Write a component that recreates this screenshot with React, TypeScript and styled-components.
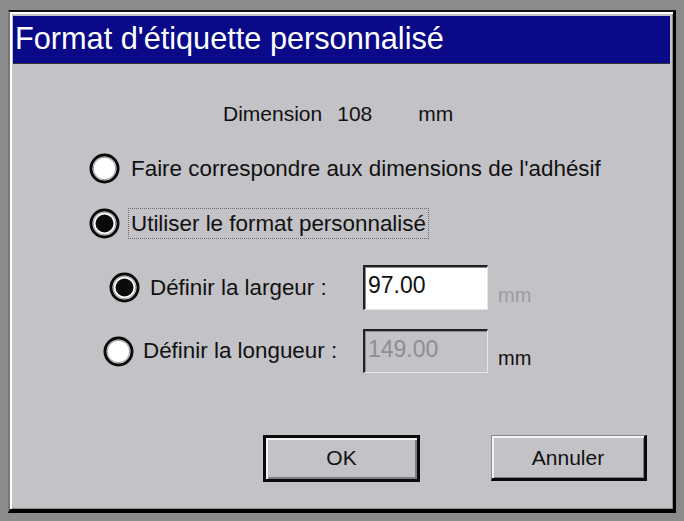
import React, { useState } from 'react';
import styled, { createGlobalStyle, css } from 'styled-components';

const GlobalStyle = createGlobalStyle`
  html, body {
    margin: 0;
    padding: 0;
    background: #8b8b8b;
  }
  * {
    box-sizing: border-box;
  }
`;

const Screen = styled.div`
  width: 684px;
  height: 521px;
  padding: 10px 8px 8px 8px;
  background: #8b8b8b;
  font-family: 'Liberation Sans', Arial, sans-serif;
`;

const Dialog = styled.div`
  width: 668px;
  height: 503px;
  display: flex;
  flex-direction: column;
  padding: 4px 3px 0 3px;
  background: #c3c2c6;
  border-style: solid;
  border-width: 2px 3px 4px 2px;
  border-color: #111 #000 #000 #777;
  box-shadow: inset 2px 2px 0 #fff, inset -1px -1px 0 #8a8a8a;
`;

const TitleBar = styled.div`
  height: 48px;
  padding-left: 2px;
  background: #0a0a88;
  border-bottom: 1px solid #333;
  color: #fff;
  font-size: 30.7px;
  line-height: 46px;
  white-space: nowrap;
`;

const Body = styled.div`
  flex: 1;
  display: flex;
  flex-direction: column;
  color: #111;
  font-size: 22.4px;
`;

const DimensionRow = styled.div`
  display: flex;
  height: 24px;
  margin-top: 38px;
  padding-left: 210px;
  font-size: 21px;
  line-height: 24px;
`;

const Spaced = styled.span<{ $gap: number }>`
  margin-left: ${(p) => p.$gap}px;
`;

const OptionRow = styled.div<{ $top: number; $indent: number }>`
  display: flex;
  align-items: center;
  gap: 11px;
  height: 30px;
  margin-top: ${(p) => p.$top}px;
  padding-left: ${(p) => p.$indent}px;
`;

const Label = styled.span<{ $focused?: boolean }>`
  height: 31px;
  padding: 0 2px;
  line-height: 29px;
  border: 1px dotted transparent;
  margin-left: -3px;
  white-space: nowrap;
  ${(p) =>
    p.$focused &&
    css`
      border-color: #6a6a6a;
    `}
`;

const FieldRow = styled.div<{ $top: number; $height: number }>`
  display: grid;
  grid-template-columns: 340px 125px auto;
  column-gap: 10px;
  align-items: center;
  height: ${(p) => p.$height}px;
  margin-top: ${(p) => p.$top}px;
`;

const FieldChoice = styled.div<{ $indent: number; $gap: number }>`
  display: flex;
  align-items: center;
  gap: ${(p) => p.$gap}px;
  padding-left: ${(p) => p.$indent}px;
  white-space: nowrap;
`;

const Field = styled.div<{ $disabled?: boolean }>`
  height: 100%;
  display: flex;
  align-items: center;
  padding: 0 0 5px 3px;
  font-size: 23px;
  background: ${(p) => (p.$disabled ? '#c3c2c6' : '#fff')};
  color: ${(p) => (p.$disabled ? '#8e8e8e' : '#111')};
  border-style: solid;
  border-width: 2px 1px 1px 2px;
  border-color: #222 #e6e6e6 #e6e6e6 #222;
  box-shadow: inset 1px 1px 0 #8a8a8a;
`;

const Unit = styled.span<{ $dim?: boolean }>`
  padding-top: 15px;
  font-size: 20px;
  color: ${(p) => (p.$dim ? '#9c9c9e' : '#111')};
`;

const ButtonRow = styled.div`
  display: flex;
  align-items: flex-start;
  gap: 71px;
  margin-top: 62px;
  padding-left: 250px;
`;

const Button = styled.button<{ $default?: boolean }>`
  width: 157px;
  height: 47px;
  font-family: 'Liberation Sans', Arial, sans-serif;
  font-size: 21px;
  color: #111;
  background: #c3c2c6;
  border-style: solid;
  ${(p) =>
    p.$default
      ? css`
          padding: 0 0 2px 0;
          border-width: 3px;
          border-color: #0a0a0a;
          box-shadow: inset 2px 2px 0 #f4f4f4, inset -2px -2px 0 #7e7e7e;
        `
      : css`
          width: 156px;
          height: 46px;
          padding: 2px 0 0 0;
          border-width: 1px 3px 3px 1px;
          border-color: #8a8a8a #0a0a0a #0a0a0a #8a8a8a;
          box-shadow: inset 2px 2px 0 #f4f4f4, inset -1px -1px 0 #7e7e7e;
        `}
`;

type RadioProps = { checked: boolean };

const Radio: React.FC<RadioProps> = ({ checked }) => (
  <svg width="31" height="31" viewBox="0 0 31 31">
    <circle cx="15.5" cy="15.5" r="13.5" fill="#fff" stroke="#0a0a0a" strokeWidth="3" />
    <circle cx="15.5" cy="15.5" r="11.2" fill="none" stroke="#7a7a7a" strokeWidth="0.8" />
    {checked && <circle cx="15.5" cy="15.5" r="9" fill="#0a0a0a" />}
  </svg>
);

const App: React.FC = () => {
  const [mode, setMode] = useState<'adhesive' | 'custom'>('custom');
  const [dimension, setDimension] = useState<'width' | 'length'>('width');

  return (
    <Screen>
      <GlobalStyle />
      <Dialog>
        <TitleBar>Format d'étiquette personnalisé</TitleBar>
        <Body>
          <DimensionRow>
            <span>Dimension</span>
            <Spaced $gap={15}>108</Spaced>
            <Spaced $gap={46}>mm</Spaced>
          </DimensionRow>
          <OptionRow $top={27} $indent={76} onClick={() => setMode('adhesive')}>
            <Radio checked={mode === 'adhesive'} />
            <Label>Faire correspondre aux dimensions de l'adhésif</Label>
          </OptionRow>
          <OptionRow $top={25} $indent={76} onClick={() => setMode('custom')}>
            <Radio checked={mode === 'custom'} />
            <Label $focused>Utiliser le format personnalisé</Label>
          </OptionRow>
          <FieldRow $top={27} $height={45}>
            <FieldChoice $indent={96} $gap={10} onClick={() => setDimension('width')}>
              <Radio checked={dimension === 'width'} />
              <span>Définir la largeur :</span>
            </FieldChoice>
            <Field $disabled={dimension !== 'width'}>97.00</Field>
            <Unit $dim>mm</Unit>
          </FieldRow>
          <FieldRow $top={19} $height={44}>
            <FieldChoice $indent={90} $gap={9} onClick={() => setDimension('length')}>
              <Radio checked={dimension === 'length'} />
              <span>Définir la longueur :</span>
            </FieldChoice>
            <Field $disabled={dimension !== 'length'}>149.00</Field>
            <Unit>mm</Unit>
          </FieldRow>
          <ButtonRow>
            <Button $default>OK</Button>
            <Button>Annuler</Button>
          </ButtonRow>
        </Body>
      </Dialog>
    </Screen>
  );
};

export default App;
